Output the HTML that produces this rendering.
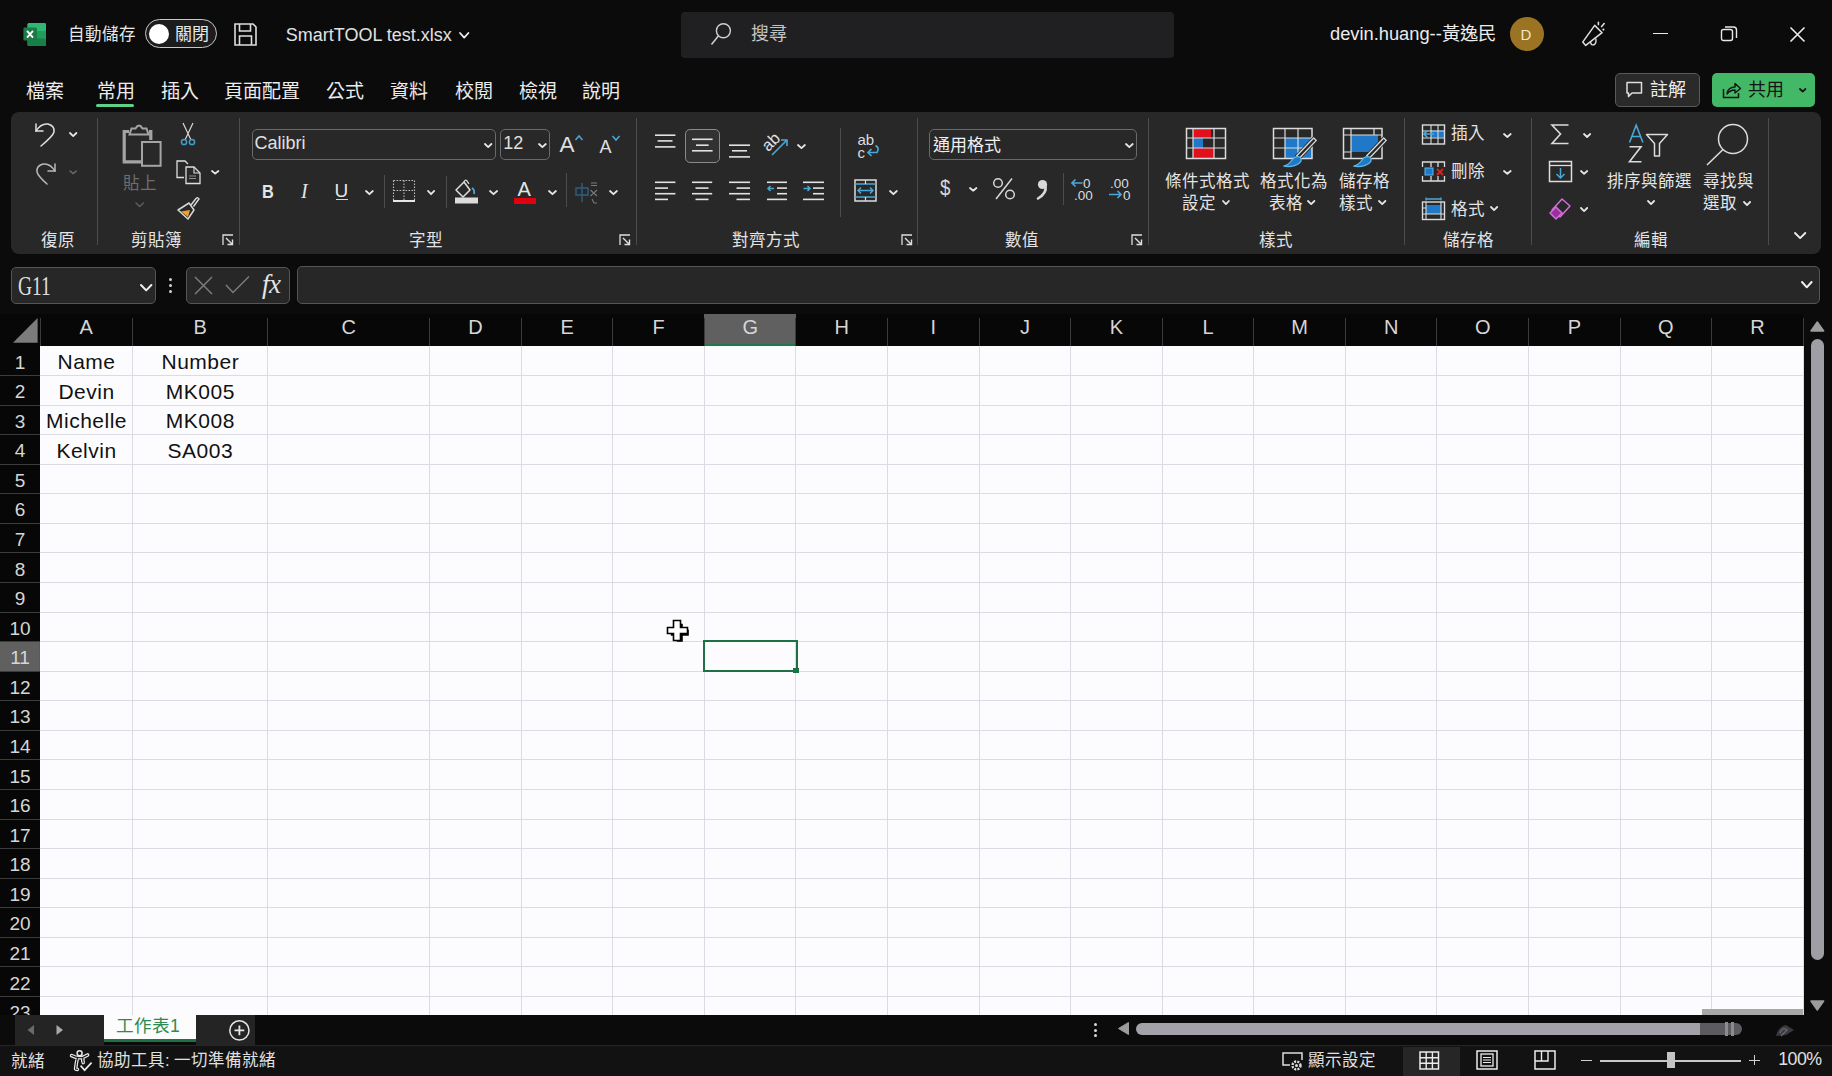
<!DOCTYPE html><html lang="zh-TW"><head><meta charset="utf-8"><title>Excel</title><style>
*{margin:0;padding:0;box-sizing:border-box}
html,body{width:1832px;height:1076px;overflow:hidden;background:#0b0b0b;font-family:"Liberation Sans",sans-serif}
.t{position:absolute;white-space:nowrap;line-height:1}
.r{position:absolute}
.s{position:absolute;overflow:visible}
</style></head><body>
<svg class="s" style="left:23px;top:23px;" width="23" height="23" viewBox="0 0 23 23">
<rect x="4.5" y="0" width="18.5" height="23" rx="1.5" fill="#1f9d5a"/>
<rect x="4.5" y="0" width="18.5" height="8" rx="1.5" fill="#2fb874"/>
<rect x="4.5" y="15.5" width="18.5" height="7.5" rx="1.5" fill="#168048"/>
<rect x="0.4" y="4.5" width="13.6" height="13.1" rx="1.2" fill="#1d7a44"/>
<path d="M4 7.8 L10 14.6 M10 7.8 L4 14.6" stroke="#fff" stroke-width="1.9"/>
</svg>
<div class="t" style="left:67.6px;top:26px;font-size:16.5px;color:#e8e8e8;">自動儲存</div>
<div class="r" style="left:145px;top:19px;width:71.5px;height:28.5px;background:#1c1c1c;border:1.5px solid #c8c8c8;border-radius:15px"></div>
<div class="r" style="left:148.7px;top:23.8px;width:20px;height:20px;background:#ffffff;border-radius:50%"></div>
<div class="t" style="left:175px;top:25.5px;font-size:17px;color:#e8e8e8;">關閉</div>
<svg class="s" style="left:234px;top:23px;" width="23" height="23" viewBox="0 0 23 23">
<path d="M1 1 H19 L22 4 V22 H1 Z" fill="none" stroke="#dedede" stroke-width="1.6"/>
<path d="M5.5 1 V8 H16.5 V1" fill="none" stroke="#dedede" stroke-width="1.6"/>
<path d="M5.5 22 V13 H17.5 V22" fill="none" stroke="#dedede" stroke-width="1.6"/>
</svg>
<div class="t" style="left:285.8px;top:25.9px;font-size:18px;color:#e2e2e2;">SmartTOOL test.xlsx</div>
<svg class="s" style="left:458.3px;top:30.700000000000003px;" width="12.399999999999977" height="8.599999999999994" viewBox="0 0 12.399999999999977 8.599999999999994"><polyline points="2,2 6.199999999999989,6.599999999999994 10.399999999999977,2" fill="none" stroke="#f0f0f0" stroke-width="1.8" stroke-linecap="round" stroke-linejoin="round"/></svg>
<div class="r" style="left:681px;top:12px;width:493px;height:45.5px;background:#202022;border-radius:4px"></div>
<svg class="s" style="left:709px;top:22px;" width="24" height="24" viewBox="0 0 24 24"><circle cx="14.4" cy="8.8" r="7" fill="none" stroke="#cfcfcf" stroke-width="1.4"/><path d="M9.5 13.8 L2.5 22.5" stroke="#cfcfcf" stroke-width="1.5"/></svg>
<div class="t" style="left:751px;top:24.7px;font-size:18px;color:#c4c4c4;">搜尋</div>
<div class="t" style="left:1330px;top:24.6px;font-size:18.3px;color:#ececec;">devin.huang--黃逸民</div>
<div class="r" style="left:1510px;top:17px;width:34px;height:34px;background:#9a7422;border-radius:50%"></div>
<div class="t" style="left:1520.5px;top:27px;font-size:15px;color:#f2e6c8;">D</div>
<svg class="s" style="left:1580px;top:21px;" width="28" height="26" viewBox="0 0 28 26">
<path d="M2.7 21.1 L14.7 4.4 L22.1 11.7 L5.7 24.4 Z" fill="none" stroke="#dedede" stroke-width="1.5" stroke-linejoin="round"/>
<path d="M10.5 20.8 Q11 25 14.5 23.5 Q16.5 22 15.8 17.5" fill="none" stroke="#dedede" stroke-width="1.4"/>
<path d="M18.4 1.3 V3.6 M21.6 5.6 L24.2 2.6" stroke="#dedede" stroke-width="1.6" stroke-linecap="round"/>
<circle cx="23.4" cy="8.6" r="1.1" fill="#dedede"/>
</svg>
<div class="r" style="left:1653px;top:32.6px;width:14.5px;height:1.6px;background:#e8e8e8;"></div>
<svg class="s" style="left:1720px;top:25px;" width="19" height="19" viewBox="0 0 19 19"><rect x="1.5" y="4.5" width="11" height="11" rx="2" fill="none" stroke="#e8e8e8" stroke-width="1.4"/><path d="M5 2 H13.5 Q16.5 2 16.5 5 V13" fill="none" stroke="#e8e8e8" stroke-width="1.4"/></svg>
<svg class="s" style="left:1789px;top:26px;" width="17" height="17" viewBox="0 0 17 17"><path d="M1.5 1.5 L15.5 15.5 M15.5 1.5 L1.5 15.5" stroke="#ececec" stroke-width="1.6"/></svg>
<div class="t" style="left:26.4px;top:81.5px;font-size:19px;color:#ececec;">檔案</div>
<div class="t" style="left:97px;top:81.5px;font-size:19px;color:#ececec;">常用</div>
<div class="t" style="left:161px;top:81.5px;font-size:19px;color:#ececec;">插入</div>
<div class="t" style="left:224px;top:81.5px;font-size:19px;color:#ececec;">頁面配置</div>
<div class="t" style="left:326.4px;top:81.5px;font-size:19px;color:#ececec;">公式</div>
<div class="t" style="left:390px;top:81.5px;font-size:19px;color:#ececec;">資料</div>
<div class="t" style="left:454.7px;top:81.5px;font-size:19px;color:#ececec;">校閱</div>
<div class="t" style="left:518.5px;top:81.5px;font-size:19px;color:#ececec;">檢視</div>
<div class="t" style="left:582px;top:81.5px;font-size:19px;color:#ececec;">說明</div>
<div class="r" style="left:95.7px;top:103.8px;width:38.6px;height:2.8px;background:#5fd08a;border-radius:2px"></div>
<div class="r" style="left:1615px;top:72.6px;width:85px;height:34px;background:#2a2a2a;border:1px solid #5a5a5a;border-radius:5px"></div>
<svg class="s" style="left:1625px;top:80px;" width="19" height="19" viewBox="0 0 19 19"><path d="M2 2.5 H16.5 V13 H7 L3.5 16.5 V13 H2 Z" fill="none" stroke="#dedede" stroke-width="1.5" stroke-linejoin="round"/></svg>
<div class="t" style="left:1650px;top:80.5px;font-size:18px;color:#ececec;">註解</div>
<div class="r" style="left:1712px;top:72.6px;width:103.3px;height:34px;background:#43b866;border-radius:5px"></div>
<svg class="s" style="left:1721px;top:80px;" width="21" height="20" viewBox="0 0 21 20"><path d="M2.5 9 V17.5 H17.5 V13" fill="none" stroke="#151515" stroke-width="1.5"/><path d="M6 14 Q7 7 14 7 V3.5 L19.5 8.5 L14 13 V10 Q9 10 6 14 Z" fill="none" stroke="#151515" stroke-width="1.4" stroke-linejoin="round"/></svg>
<div class="t" style="left:1747.5px;top:80.5px;font-size:18px;color:#141414;">共用</div>
<svg class="s" style="left:1798.2px;top:87.2px;" width="9.400000000000091" height="6.599999999999994" viewBox="0 0 9.400000000000091 6.599999999999994"><polyline points="2,2 4.7000000000000455,4.599999999999994 7.400000000000091,2" fill="none" stroke="#151515" stroke-width="1.8" stroke-linecap="round" stroke-linejoin="round"/></svg>
<div class="r" style="left:11px;top:112px;width:1809.6px;height:142px;background:#282828;border-radius:8px"></div>
<div class="r" style="left:96.7px;top:118px;width:1px;height:127px;background:#4c4c4c;"></div>
<div class="r" style="left:239.4px;top:118px;width:1px;height:127px;background:#4c4c4c;"></div>
<div class="r" style="left:635.6px;top:118px;width:1px;height:127px;background:#4c4c4c;"></div>
<div class="r" style="left:917.4px;top:118px;width:1px;height:127px;background:#4c4c4c;"></div>
<div class="r" style="left:1148.3px;top:118px;width:1px;height:127px;background:#4c4c4c;"></div>
<div class="r" style="left:1404px;top:118px;width:1px;height:127px;background:#4c4c4c;"></div>
<div class="r" style="left:1530.8px;top:118px;width:1px;height:127px;background:#4c4c4c;"></div>
<div class="r" style="left:1768.3px;top:118px;width:1px;height:127px;background:#4c4c4c;"></div>
<div class="r" style="left:383.8px;top:174.5px;width:1px;height:33.80000000000001px;background:#4c4c4c;"></div>
<div class="r" style="left:445.9px;top:175.8px;width:1px;height:31.799999999999983px;background:#4c4c4c;"></div>
<div class="r" style="left:566.4px;top:172.5px;width:1px;height:34.5px;background:#4c4c4c;"></div>
<div class="r" style="left:840px;top:127.6px;width:1px;height:89.80000000000001px;background:#4c4c4c;"></div>
<div class="r" style="left:1062.8px;top:172.5px;width:1px;height:32.5px;background:#4c4c4c;"></div>
<div class="t" style="left:40.8px;top:231.5px;font-size:16.5px;color:#e4e4e4;">復原</div>
<div class="t" style="left:131.4px;top:231.5px;font-size:16.5px;color:#e4e4e4;">剪貼簿</div>
<div class="t" style="left:409px;top:231.5px;font-size:16.5px;color:#e4e4e4;">字型</div>
<div class="t" style="left:731.7px;top:231.5px;font-size:16.5px;color:#e4e4e4;">對齊方式</div>
<div class="t" style="left:1004.6px;top:231.5px;font-size:16.5px;color:#e4e4e4;">數值</div>
<div class="t" style="left:1259.3px;top:231.5px;font-size:16.5px;color:#e4e4e4;">樣式</div>
<div class="t" style="left:1443px;top:231.5px;font-size:16.5px;color:#e4e4e4;">儲存格</div>
<div class="t" style="left:1633.6px;top:231.5px;font-size:16.5px;color:#e4e4e4;">編輯</div>
<svg class="s" style="left:222px;top:234px;" width="12" height="12" viewBox="0 0 12 12"><path d="M1 11 V1 H11" fill="none" stroke="#dedede" stroke-width="1.3"/><path d="M4 4 L10.5 10.5 M5.5 10.5 H10.5 V5.5" fill="none" stroke="#dedede" stroke-width="1.4"/></svg>
<svg class="s" style="left:619.3px;top:234.3px;" width="12" height="12" viewBox="0 0 12 12"><path d="M1 11 V1 H11" fill="none" stroke="#dedede" stroke-width="1.3"/><path d="M4 4 L10.5 10.5 M5.5 10.5 H10.5 V5.5" fill="none" stroke="#dedede" stroke-width="1.4"/></svg>
<svg class="s" style="left:900.9px;top:234.3px;" width="12" height="12" viewBox="0 0 12 12"><path d="M1 11 V1 H11" fill="none" stroke="#dedede" stroke-width="1.3"/><path d="M4 4 L10.5 10.5 M5.5 10.5 H10.5 V5.5" fill="none" stroke="#dedede" stroke-width="1.4"/></svg>
<svg class="s" style="left:1131.4px;top:234.3px;" width="12" height="12" viewBox="0 0 12 12"><path d="M1 11 V1 H11" fill="none" stroke="#dedede" stroke-width="1.3"/><path d="M4 4 L10.5 10.5 M5.5 10.5 H10.5 V5.5" fill="none" stroke="#dedede" stroke-width="1.4"/></svg>
<svg class="s" style="left:1793.3px;top:231.2px;" width="14.300000000000182" height="9.100000000000023" viewBox="0 0 14.300000000000182 9.100000000000023"><polyline points="2,2 7.150000000000091,7.100000000000023 12.300000000000182,2" fill="none" stroke="#f0f0f0" stroke-width="1.8" stroke-linecap="round" stroke-linejoin="round"/></svg>
<svg class="s" style="left:33px;top:121px;" width="25" height="27" viewBox="0 0 25 27"><path d="M3 10 Q8 2 15 3 Q22 5 21 11 Q20 15 8 25" fill="none" stroke="#dedede" stroke-width="1.5" stroke-linecap="round"/><path d="M3 3 V10 H10" fill="none" stroke="#dedede" stroke-width="1.5" stroke-linecap="round"/></svg>
<svg class="s" style="left:67.8px;top:131.2px;" width="10.400000000000006" height="7.100000000000023" viewBox="0 0 10.400000000000006 7.100000000000023"><polyline points="2,2 5.200000000000003,5.100000000000023 8.400000000000006,2" fill="none" stroke="#e6e6e6" stroke-width="1.8" stroke-linecap="round" stroke-linejoin="round"/></svg>
<svg class="s" style="left:33px;top:158px;transform:scaleY(-1)" width="25" height="27" viewBox="0 0 25 27"><path d="M22 14 Q17 22 10 21 Q3 19 4 13 Q5 9 14 1" fill="none" stroke="#b8b8b8" stroke-width="1.5" stroke-linecap="round"/><path d="M22 21 V14 H15" fill="none" stroke="#b8b8b8" stroke-width="1.5" stroke-linecap="round"/></svg>
<svg class="s" style="left:67.8px;top:168.7px;" width="10.400000000000006" height="6.600000000000023" viewBox="0 0 10.400000000000006 6.600000000000023"><polyline points="2,2 5.200000000000003,4.600000000000023 8.400000000000006,2" fill="none" stroke="#6a6a6a" stroke-width="1.4" stroke-linecap="round" stroke-linejoin="round"/></svg>
<svg class="s" style="left:121px;top:123px;" width="42" height="45" viewBox="0 0 42 45">
<path d="M22 38.8 H3.2 V8.5 H8 M28 8.5 H29.8 V17" fill="none" stroke="#a4a4a4" stroke-width="3.2"/>
<path d="M8.5 11.5 L10.5 5.5 H14.5 Q18 -0.5 21.5 5.5 H25.5 L27.5 11.5 Z" fill="#282828" stroke="#a4a4a4" stroke-width="2"/>
<rect x="21" y="19" width="18.6" height="23.8" fill="none" stroke="#a4a4a4" stroke-width="2"/>
</svg>
<div class="t" style="left:123px;top:175px;font-size:16.5px;color:#6e6e6e;">貼上</div>
<svg class="s" style="left:133.8px;top:200.7px;" width="11.399999999999977" height="7.600000000000023" viewBox="0 0 11.399999999999977 7.600000000000023"><polyline points="2,2 5.699999999999989,5.600000000000023 9.399999999999977,2" fill="none" stroke="#5e5e5e" stroke-width="1.4" stroke-linecap="round" stroke-linejoin="round"/></svg>
<svg class="s" style="left:178px;top:121px;" width="20" height="27" viewBox="0 0 20 27"><path d="M5 2 L13 19 M15 2 L7 19" stroke="#d8d8d8" stroke-width="1.2"/><circle cx="6" cy="21" r="2.6" fill="none" stroke="#3f9fd0" stroke-width="1.5"/><circle cx="14" cy="21" r="2.6" fill="none" stroke="#3f9fd0" stroke-width="1.5"/></svg>
<svg class="s" style="left:175px;top:159px;" width="27" height="26" viewBox="0 0 27 26"><path d="M9 18.5 H2 V2 H10 L13 5" fill="none" stroke="#dedede" stroke-width="1.3"/><path d="M11 8 H19 L25 14 V24.5 H11 Z" fill="none" stroke="#dedede" stroke-width="1.3"/><path d="M19 8 V14 H25" fill="none" stroke="#dedede" stroke-width="1.1"/><path d="M14 17 H21 M14 19.5 H21" stroke="#9a9a9a" stroke-width="0.9"/></svg>
<svg class="s" style="left:209.8px;top:169.2px;" width="10.399999999999977" height="6.600000000000023" viewBox="0 0 10.399999999999977 6.600000000000023"><polyline points="2,2 5.199999999999989,4.600000000000023 8.399999999999977,2" fill="none" stroke="#e6e6e6" stroke-width="1.8" stroke-linecap="round" stroke-linejoin="round"/></svg>
<svg class="s" style="left:176px;top:196px;" width="25" height="25" viewBox="0 0 25 25"><path d="M15 9 L20 2.5 Q22 1 23 3 L17.5 10.5" fill="none" stroke="#d8d8d8" stroke-width="1.5"/><path d="M2 14 L13 7 L18 14 L12 23 Z" fill="none" stroke="#d8d8d8" stroke-width="1.5" stroke-linejoin="round"/><path d="M5 15.5 L14 14 L12 21 Z" fill="#f0a030"/></svg>
<div class="r" style="left:251.5px;top:129px;width:244.2px;height:31px;background:transparent;border:1px solid #6a6a6a;border-radius:5px"></div>
<div class="t" style="left:254.6px;top:134.4px;font-size:18px;color:#e0e0e0;">Calibri</div>
<svg class="s" style="left:482.8px;top:142.2px;" width="10.399999999999977" height="7.100000000000023" viewBox="0 0 10.399999999999977 7.100000000000023"><polyline points="2,2 5.199999999999989,5.100000000000023 8.399999999999977,2" fill="none" stroke="#e8e8e8" stroke-width="1.8" stroke-linecap="round" stroke-linejoin="round"/></svg>
<div class="r" style="left:499.6px;top:129px;width:50.7px;height:31px;background:transparent;border:1px solid #6a6a6a;border-radius:5px"></div>
<div class="t" style="left:503.2px;top:134.4px;font-size:18px;color:#e0e0e0;">12</div>
<svg class="s" style="left:536.8px;top:142.2px;" width="10.800000000000068" height="7.100000000000023" viewBox="0 0 10.800000000000068 7.100000000000023"><polyline points="2,2 5.400000000000034,5.100000000000023 8.800000000000068,2" fill="none" stroke="#e8e8e8" stroke-width="1.8" stroke-linecap="round" stroke-linejoin="round"/></svg>
<div class="t" style="left:559.6px;top:133.5px;font-size:22.5px;color:#e0e0e0;">A</div>
<svg class="s" style="left:574px;top:134px;" width="10" height="8" viewBox="0 0 10 8"><polyline points="1.5,6 5,2 8.5,6" fill="none" stroke="#4aa8d8" stroke-width="1.5"/></svg>
<div class="t" style="left:599.5px;top:137.5px;font-size:18px;color:#e0e0e0;">A</div>
<svg class="s" style="left:611px;top:134px;" width="10" height="8" viewBox="0 0 10 8"><polyline points="1.5,2 5,6 8.5,2" fill="none" stroke="#4aa8d8" stroke-width="1.5"/></svg>
<div class="t" style="left:262.3px;top:181.5px;font-size:19px;color:#e4e4e4;font-weight:bold;transform:scaleX(0.86);transform-origin:0 0">B</div>
<div class="t" style="left:301px;top:180.9px;font-size:20px;color:#e4e4e4;font-family:'Liberation Serif',serif;font-style:italic">I</div>
<div class="t" style="left:334.5px;top:180.9px;font-size:19px;color:#e4e4e4;">U</div>
<div class="r" style="left:335.6px;top:199.3px;width:12.4px;height:1.2px;background:#d8d8d8;"></div>
<svg class="s" style="left:363.8px;top:188.7px;" width="10.799999999999955" height="7.200000000000017" viewBox="0 0 10.799999999999955 7.200000000000017"><polyline points="2,2 5.399999999999977,5.200000000000017 8.799999999999955,2" fill="none" stroke="#e6e6e6" stroke-width="1.8" stroke-linecap="round" stroke-linejoin="round"/></svg>
<svg class="s" style="left:392px;top:179px;" width="24" height="24" viewBox="0 0 24 24"><path d="M1.5 1.5 H22.5 V21 M1.5 1.5 V21 M12 1.5 V21 M1.5 11.5 H22.5" fill="none" stroke="#bdbdbd" stroke-width="1.1" stroke-dasharray="1.6 1.4"/><path d="M1 22 H23" stroke="#e6e6e6" stroke-width="2"/></svg>
<svg class="s" style="left:426.2px;top:188.7px;" width="10.199999999999989" height="7.200000000000017" viewBox="0 0 10.199999999999989 7.200000000000017"><polyline points="2,2 5.099999999999994,5.200000000000017 8.199999999999989,2" fill="none" stroke="#e6e6e6" stroke-width="1.8" stroke-linecap="round" stroke-linejoin="round"/></svg>
<svg class="s" style="left:453px;top:178px;" width="27" height="27" viewBox="0 0 27 27"><path d="M3 12 L11 4 L17 12 L10 19 Z" fill="none" stroke="#dedede" stroke-width="1.5" stroke-linejoin="round"/><path d="M11 4 Q12 1 14 3 L16 6" fill="none" stroke="#dedede" stroke-width="1.3"/><path d="M19 10 Q22 12 21 16" fill="none" stroke="#4aa8d8" stroke-width="1.8"/><rect x="2" y="19.5" width="23" height="6" fill="#dcdcdc"/></svg>
<svg class="s" style="left:487.8px;top:188.7px;" width="11.099999999999966" height="7.200000000000017" viewBox="0 0 11.099999999999966 7.200000000000017"><polyline points="2,2 5.549999999999983,5.200000000000017 9.099999999999966,2" fill="none" stroke="#e6e6e6" stroke-width="1.8" stroke-linecap="round" stroke-linejoin="round"/></svg>
<div class="t" style="left:517.5px;top:178.5px;font-size:20px;color:#e4e4e4;">A</div>
<div class="r" style="left:514px;top:197.9px;width:22px;height:5.8px;background:#e00010;"></div>
<svg class="s" style="left:546.5px;top:188.7px;" width="10.900000000000091" height="7.200000000000017" viewBox="0 0 10.900000000000091 7.200000000000017"><polyline points="2,2 5.4500000000000455,5.200000000000017 8.900000000000091,2" fill="none" stroke="#e6e6e6" stroke-width="1.8" stroke-linecap="round" stroke-linejoin="round"/></svg>
<svg class="s" style="left:575px;top:181px;" width="25" height="23" viewBox="0 0 25 23"><path d="M1 7 H13 V14 H1 Z M7 2 V21" fill="none" stroke="#2f5f80" stroke-width="1.4"/><path d="M16 2 H22 M16 4.5 H22 M15.5 9 L22 15 M22 9 L15.5 15 M17 18 L19 22 H22" fill="none" stroke="#7a7a7a" stroke-width="1.1"/></svg>
<svg class="s" style="left:608.3px;top:188.7px;" width="10.900000000000091" height="7.200000000000017" viewBox="0 0 10.900000000000091 7.200000000000017"><polyline points="2,2 5.4500000000000455,5.200000000000017 8.900000000000091,2" fill="none" stroke="#e6e6e6" stroke-width="1.8" stroke-linecap="round" stroke-linejoin="round"/></svg>
<svg class="s" style="left:654px;top:130px;" width="24" height="24" viewBox="0 0 24 24"><path d="M1 5.2 H21.4" stroke="#e2e2e2" stroke-width="1.6"/><path d="M3.6 10.9 H18.5" stroke="#e2e2e2" stroke-width="1.6"/><path d="M1 16.9 H21.4" stroke="#e2e2e2" stroke-width="1.6"/></svg>
<div class="r" style="left:685.3px;top:129px;width:34.3px;height:33.5px;background:#323232;border:1px solid #8a8a8a;border-radius:5px"></div>
<svg class="s" style="left:691px;top:135px;" width="24" height="24" viewBox="0 0 24 24"><path d="M1 4.3 H21.6" stroke="#e2e2e2" stroke-width="1.6"/><path d="M5 10.2 H17.6" stroke="#e2e2e2" stroke-width="1.6"/><path d="M1 15.8 H21.6" stroke="#e2e2e2" stroke-width="1.6"/></svg>
<svg class="s" style="left:728px;top:140px;" width="24" height="24" viewBox="0 0 24 24"><path d="M1 5.2 H22" stroke="#e2e2e2" stroke-width="1.6"/><path d="M4 10.8 H19" stroke="#e2e2e2" stroke-width="1.6"/><path d="M1 16.9 H22" stroke="#e2e2e2" stroke-width="1.6"/></svg>
<svg class="s" style="left:763px;top:132px;" width="28" height="26" viewBox="0 0 28 26"><text x="0" y="0" transform="translate(5.2,20.3) rotate(-45)" font-family="Liberation Sans" font-size="16.5" fill="#e2e2e2">ab</text><path d="M9 23 L24 8 M18 8 H24 V14" fill="none" stroke="#4aa8d8" stroke-width="1.6"/></svg>
<svg class="s" style="left:795.5999999999999px;top:143.2px;" width="10.900000000000091" height="7.100000000000023" viewBox="0 0 10.900000000000091 7.100000000000023"><polyline points="2,2 5.4500000000000455,5.100000000000023 8.900000000000091,2" fill="none" stroke="#e6e6e6" stroke-width="1.8" stroke-linecap="round" stroke-linejoin="round"/></svg>
<svg class="s" style="left:654px;top:177px;" width="24" height="26" viewBox="0 0 24 26"><path d="M1 5.3 H21.4" stroke="#e2e2e2" stroke-width="1.6"/><path d="M1 11.1 H14" stroke="#e2e2e2" stroke-width="1.6"/><path d="M1 16.7 H21.4" stroke="#e2e2e2" stroke-width="1.6"/><path d="M1 22.4 H14" stroke="#e2e2e2" stroke-width="1.6"/></svg>
<svg class="s" style="left:691px;top:177px;" width="24" height="26" viewBox="0 0 24 26"><path d="M1 5.3 H21.2" stroke="#e2e2e2" stroke-width="1.6"/><path d="M4.5 11.1 H17.5" stroke="#e2e2e2" stroke-width="1.6"/><path d="M1 16.7 H21.2" stroke="#e2e2e2" stroke-width="1.6"/><path d="M4.5 22.4 H17.5" stroke="#e2e2e2" stroke-width="1.6"/></svg>
<svg class="s" style="left:728px;top:177px;" width="24" height="26" viewBox="0 0 24 26"><path d="M1 5.3 H22" stroke="#e2e2e2" stroke-width="1.6"/><path d="M8.5 11.1 H22" stroke="#e2e2e2" stroke-width="1.6"/><path d="M1 16.7 H22" stroke="#e2e2e2" stroke-width="1.6"/><path d="M8.5 22.4 H22" stroke="#e2e2e2" stroke-width="1.6"/></svg>
<svg class="s" style="left:766px;top:177px;" width="24" height="26" viewBox="0 0 24 26"><path d="M1 5.3 H21" stroke="#e2e2e2" stroke-width="1.6"/><path d="M11 11.1 H21" stroke="#e2e2e2" stroke-width="1.6"/><path d="M11 16.7 H21" stroke="#e2e2e2" stroke-width="1.6"/><path d="M1 22.4 H21" stroke="#e2e2e2" stroke-width="1.6"/><path d="M8 11.5 H2 M4.5 9 L2 11.5 L4.5 14" fill="none" stroke="#4aa8d8" stroke-width="1.5"/></svg>
<svg class="s" style="left:802px;top:177px;" width="24" height="26" viewBox="0 0 24 26"><path d="M1 5.3 H22" stroke="#e2e2e2" stroke-width="1.6"/><path d="M11 11.1 H22" stroke="#e2e2e2" stroke-width="1.6"/><path d="M11 16.7 H22" stroke="#e2e2e2" stroke-width="1.6"/><path d="M1 22.4 H22" stroke="#e2e2e2" stroke-width="1.6"/><path d="M1.5 11.5 H8 M5.5 9 L8 11.5 L5.5 14" fill="none" stroke="#4aa8d8" stroke-width="1.5"/></svg>
<svg class="s" style="left:856px;top:132px;" width="26" height="28" viewBox="0 0 26 28"><text x="1.5" y="13" font-family="Liberation Sans" font-size="15" fill="#dcdcdc">ab</text><text x="1.5" y="26" font-family="Liberation Sans" font-size="15" fill="#dcdcdc">c</text><path d="M19.5 13.5 Q24 16 21 20.5 H12 M15.5 17 L12 20.5 L15.5 24" fill="none" stroke="#4aa8d8" stroke-width="1.7"/></svg>
<svg class="s" style="left:854px;top:179px;" width="24" height="24" viewBox="0 0 24 24"><rect x="1" y="1" width="21" height="21" fill="none" stroke="#dcdcdc" stroke-width="1.5"/><path d="M1 5 H22 M1 18 H22" stroke="#4aa8d8" stroke-width="1.5"/><path d="M11.5 1 V5 M11.5 18 V22" stroke="#dcdcdc" stroke-width="1.2"/><path d="M4 11.5 H19 M7 8.5 L4 11.5 L7 14.5 M16 8.5 L19 11.5 L16 14.5" fill="none" stroke="#4aa8d8" stroke-width="1.5"/></svg>
<svg class="s" style="left:888.0px;top:188.7px;" width="10.800000000000068" height="7.200000000000017" viewBox="0 0 10.800000000000068 7.200000000000017"><polyline points="2,2 5.400000000000034,5.200000000000017 8.800000000000068,2" fill="none" stroke="#e6e6e6" stroke-width="1.8" stroke-linecap="round" stroke-linejoin="round"/></svg>
<div class="r" style="left:929.4px;top:129px;width:208.1px;height:31px;background:transparent;border:1px solid #6a6a6a;border-radius:5px"></div>
<div class="t" style="left:933px;top:136.5px;font-size:17px;color:#f0f0f0;">通用格式</div>
<svg class="s" style="left:1123.8px;top:142.2px;" width="10.700000000000045" height="7.100000000000023" viewBox="0 0 10.700000000000045 7.100000000000023"><polyline points="2,2 5.350000000000023,5.100000000000023 8.700000000000045,2" fill="none" stroke="#e8e8e8" stroke-width="1.8" stroke-linecap="round" stroke-linejoin="round"/></svg>
<div class="t" style="left:940px;top:176.5px;font-size:22px;color:#d8d8d8;transform:scaleX(0.85);transform-origin:0 0">$</div>
<svg class="s" style="left:968.0px;top:186.2px;" width="10.400000000000091" height="6.700000000000017" viewBox="0 0 10.400000000000091 6.700000000000017"><polyline points="2,2 5.2000000000000455,4.700000000000017 8.400000000000091,2" fill="none" stroke="#e6e6e6" stroke-width="1.8" stroke-linecap="round" stroke-linejoin="round"/></svg>
<svg class="s" style="left:992px;top:177px;" width="25" height="24" viewBox="0 0 25 24"><circle cx="6" cy="6" r="4.3" fill="none" stroke="#d8d8d8" stroke-width="1.5"/><circle cx="18" cy="17.5" r="4.3" fill="none" stroke="#d8d8d8" stroke-width="1.5"/><path d="M20 1.5 L4 22" stroke="#d8d8d8" stroke-width="1.5"/></svg>
<svg class="s" style="left:1035px;top:178px;" width="15" height="22" viewBox="0 0 15 22"><circle cx="7.5" cy="6.5" r="4.6" fill="#d8d8d8"/><path d="M10.5 8 Q12 15 3 20.5" fill="none" stroke="#d8d8d8" stroke-width="2.6" stroke-linecap="round"/></svg>
<svg class="s" style="left:1070px;top:176px;" width="26" height="25" viewBox="0 0 26 25"><text x="13" y="11.5" font-family="Liberation Sans" font-size="13.5" fill="#dcdcdc">0</text><text x="4" y="23.5" font-family="Liberation Sans" font-size="13.5" fill="#dcdcdc">.00</text><path d="M12.5 7 H2 M5.5 3.5 L2 7 L5.5 10.5" fill="none" stroke="#4aa8d8" stroke-width="1.7"/></svg>
<svg class="s" style="left:1108px;top:176px;" width="26" height="25" viewBox="0 0 26 25"><text x="2" y="11.5" font-family="Liberation Sans" font-size="13.5" fill="#dcdcdc">.00</text><text x="15" y="23.5" font-family="Liberation Sans" font-size="13.5" fill="#dcdcdc">0</text><path d="M1 18.5 H13 M9.5 15 L13 18.5 L9.5 22" fill="none" stroke="#4aa8d8" stroke-width="1.7"/></svg>
<svg class="s" style="left:1185px;top:127px;" width="42" height="34" viewBox="0 0 42 34">
<rect x="8" y="1.5" width="18" height="9.5" fill="#e0101e"/>
<rect x="8" y="11" width="10" height="10" fill="#1f78c8"/>
<rect x="8" y="21" width="21" height="10.5" fill="#e0101e"/>
<rect x="1.5" y="1.5" width="39" height="30" fill="none" stroke="#dcdcdc" stroke-width="1.5"/>
<path d="M8 1.5 V31.5 M29 1.5 V31.5 M1.5 11 H40.5 M1.5 21 H40.5" stroke="#dcdcdc" stroke-width="1.2"/>
</svg>
<div class="t" style="left:1165px;top:173px;font-size:16.5px;color:#e4e4e4;">條件式格式</div>
<div class="t" style="left:1182px;top:195px;font-size:16.5px;color:#e4e4e4;">設定</div>
<svg class="s" style="left:1220.8px;top:199.2px;" width="9.900000000000091" height="7.100000000000023" viewBox="0 0 9.900000000000091 7.100000000000023"><polyline points="2,2 4.9500000000000455,5.100000000000023 7.900000000000091,2" fill="none" stroke="#e6e6e6" stroke-width="1.8" stroke-linecap="round" stroke-linejoin="round"/></svg>
<svg class="s" style="left:1272px;top:127px;" width="45" height="41" viewBox="0 0 45 41">
<rect x="13" y="11" width="27" height="20" fill="#1f78c8"/>
<rect x="1.5" y="1.5" width="38.5" height="30" fill="none" stroke="#dcdcdc" stroke-width="1.5"/>
<path d="M13 1.5 V31.5 M26 1.5 V31.5 M1.5 11 H40 M1.5 21 H40" stroke="#dcdcdc" stroke-width="1.2"/>
<path d="M43 12.2 L26 30" stroke="#282828" stroke-width="6.5" stroke-linecap="round"/>
<path d="M44.3 13.4 L41.7 11 L24.7 28.8 L27.3 31.2 Z" fill="#282828" stroke="#dcdcdc" stroke-width="1.3" stroke-linejoin="round"/>
<path d="M11.5 39.2 Q17 37.5 20 33 Q23 28.5 27.5 30 Q31 32.5 27.5 36 Q22 40.5 11.5 39.2 Z" fill="#1f78c8" stroke="#5ab8e8" stroke-width="1.3"/>
</svg>
<div class="t" style="left:1260px;top:173px;font-size:16.5px;color:#e4e4e4;">格式化為</div>
<div class="t" style="left:1269px;top:195px;font-size:16.5px;color:#e4e4e4;">表格</div>
<svg class="s" style="left:1306.3px;top:199.2px;" width="10.400000000000091" height="7.100000000000023" viewBox="0 0 10.400000000000091 7.100000000000023"><polyline points="2,2 5.2000000000000455,5.100000000000023 8.400000000000091,2" fill="none" stroke="#e6e6e6" stroke-width="1.8" stroke-linecap="round" stroke-linejoin="round"/></svg>
<svg class="s" style="left:1342px;top:127px;" width="45" height="41" viewBox="0 0 45 41">
<rect x="9" y="8" width="27" height="17" fill="#1f78c8"/>
<rect x="1.5" y="1.5" width="38.5" height="30" fill="none" stroke="#dcdcdc" stroke-width="1.5"/>
<path d="M9 1.5 V31.5 M1.5 8 H40 M1.5 25 H9 M32 1.5 V8" stroke="#dcdcdc" stroke-width="1.2"/>
<path d="M43 12.2 L26 30" stroke="#282828" stroke-width="6.5" stroke-linecap="round"/>
<path d="M44.3 13.4 L41.7 11 L24.7 28.8 L27.3 31.2 Z" fill="#282828" stroke="#dcdcdc" stroke-width="1.3" stroke-linejoin="round"/>
<path d="M11.5 39.2 Q17 37.5 20 33 Q23 28.5 27.5 30 Q31 32.5 27.5 36 Q22 40.5 11.5 39.2 Z" fill="#1f78c8" stroke="#5ab8e8" stroke-width="1.3"/>
</svg>
<div class="t" style="left:1338.8px;top:173px;font-size:16.5px;color:#e4e4e4;">儲存格</div>
<div class="t" style="left:1338.8px;top:195px;font-size:16.5px;color:#e4e4e4;">樣式</div>
<svg class="s" style="left:1376.8px;top:199.2px;" width="10.400000000000091" height="7.100000000000023" viewBox="0 0 10.400000000000091 7.100000000000023"><polyline points="2,2 5.2000000000000455,5.100000000000023 8.400000000000091,2" fill="none" stroke="#e6e6e6" stroke-width="1.8" stroke-linecap="round" stroke-linejoin="round"/></svg>
<svg class="s" style="left:1421px;top:124px;" width="25" height="22" viewBox="0 0 25 22"><rect x="10" y="6.5" width="13" height="7" fill="#1f78c8"/><rect x="1.5" y="1" width="22" height="19" fill="none" stroke="#dcdcdc" stroke-width="1.4"/><path d="M10 1 V20 M17 1 V20 M1.5 7 H23.5 M1.5 14 H23.5" stroke="#dcdcdc" stroke-width="1.1"/><path d="M13 10 H3 M6.5 6.5 L3 10 L6.5 13.5" fill="none" stroke="#4aa8d8" stroke-width="1.7"/></svg>
<div class="t" style="left:1451.4px;top:125px;font-size:16.5px;color:#e4e4e4;">插入</div>
<svg class="s" style="left:1501.8px;top:131.7px;" width="10.700000000000045" height="7.000000000000028" viewBox="0 0 10.700000000000045 7.000000000000028"><polyline points="2,2 5.350000000000023,5.000000000000028 8.700000000000045,2" fill="none" stroke="#e6e6e6" stroke-width="1.8" stroke-linecap="round" stroke-linejoin="round"/></svg>
<svg class="s" style="left:1421px;top:161px;" width="25" height="22" viewBox="0 0 25 22"><path d="M1.5 6 V1 H23.5 V6 M1.5 15 V20 H23.5 V15 M10 1 V6 M17 1 V6 M10 15 V20 M17 15 V20" fill="none" stroke="#dcdcdc" stroke-width="1.3"/><rect x="4" y="7" width="8" height="7" fill="#1f78c8" stroke="#5ab8e8" stroke-width="1"/><path d="M16 8 L22 14 M22 8 L16 14" stroke="#e02020" stroke-width="1.8"/></svg>
<div class="t" style="left:1451.4px;top:162.5px;font-size:16.5px;color:#e4e4e4;">刪除</div>
<svg class="s" style="left:1501.8px;top:169.0px;" width="10.700000000000045" height="6.800000000000011" viewBox="0 0 10.700000000000045 6.800000000000011"><polyline points="2,2 5.350000000000023,4.800000000000011 8.700000000000045,2" fill="none" stroke="#e6e6e6" stroke-width="1.8" stroke-linecap="round" stroke-linejoin="round"/></svg>
<svg class="s" style="left:1421px;top:197px;" width="25" height="24" viewBox="0 0 25 24"><rect x="5" y="8" width="15" height="9" fill="#1f78c8"/><rect x="1.5" y="5" width="22" height="17.5" fill="none" stroke="#dcdcdc" stroke-width="1.4"/><path d="M5 5 V22.5 M20 5 V22.5 M1.5 17 H23.5 M1.5 11 H5" stroke="#dcdcdc" stroke-width="1.1"/><path d="M5 2 H20 M5 0.5 V3.5 M20 0.5 V3.5" stroke="#4aa8d8" stroke-width="1.3"/></svg>
<div class="t" style="left:1451.4px;top:200.5px;font-size:16.5px;color:#e4e4e4;">格式</div>
<svg class="s" style="left:1489.2px;top:205.2px;" width="10.200000000000045" height="7.100000000000023" viewBox="0 0 10.200000000000045 7.100000000000023"><polyline points="2,2 5.100000000000023,5.100000000000023 8.200000000000045,2" fill="none" stroke="#e6e6e6" stroke-width="1.8" stroke-linecap="round" stroke-linejoin="round"/></svg>
<svg class="s" style="left:1550px;top:123px;" width="21" height="23" viewBox="0 0 21 23"><path d="M18.5 2 H2 L10.5 11 L2 20.5 H18.5" fill="none" stroke="#dcdcdc" stroke-width="1.6"/></svg>
<svg class="s" style="left:1582.3px;top:131.7px;" width="10.200000000000045" height="7.000000000000028" viewBox="0 0 10.200000000000045 7.000000000000028"><polyline points="2,2 5.100000000000023,5.000000000000028 8.200000000000045,2" fill="none" stroke="#e6e6e6" stroke-width="1.8" stroke-linecap="round" stroke-linejoin="round"/></svg>
<svg class="s" style="left:1548px;top:160px;" width="25" height="23" viewBox="0 0 25 23"><rect x="1.5" y="1.5" width="22" height="20" fill="none" stroke="#dcdcdc" stroke-width="1.5"/><path d="M1.5 5.5 H23.5" stroke="#dcdcdc" stroke-width="1.3"/><path d="M12.5 8 V18 M8.5 14 L12.5 18 L16.5 14" fill="none" stroke="#4aa8d8" stroke-width="1.5"/></svg>
<svg class="s" style="left:1579.0px;top:169.0px;" width="10.200000000000045" height="6.800000000000011" viewBox="0 0 10.200000000000045 6.800000000000011"><polyline points="2,2 5.100000000000023,4.800000000000011 8.200000000000045,2" fill="none" stroke="#e6e6e6" stroke-width="1.8" stroke-linecap="round" stroke-linejoin="round"/></svg>
<svg class="s" style="left:1548px;top:197px;" width="24" height="24" viewBox="0 0 24 24"><path d="M14 2 L22 9 L12 20 L4 13 Z" fill="none" stroke="#d070d8" stroke-width="1.5" stroke-linejoin="round"/><path d="M2 16 L8 10 L14 16 L8 22 Z" fill="#9a30a0" stroke="#d070d8" stroke-width="1.5" stroke-linejoin="round"/></svg>
<svg class="s" style="left:1579.0px;top:205.7px;" width="10.200000000000045" height="7.100000000000023" viewBox="0 0 10.200000000000045 7.100000000000023"><polyline points="2,2 5.100000000000023,5.100000000000023 8.200000000000045,2" fill="none" stroke="#e6e6e6" stroke-width="1.8" stroke-linecap="round" stroke-linejoin="round"/></svg>
<svg class="s" style="left:1626px;top:122px;" width="20" height="44" viewBox="0 0 20 44"><path d="M3.5 20.5 L10.2 3.2 L16.9 20.5 M5.8 14.5 H14.6" fill="none" stroke="#4aa8d8" stroke-width="1.6"/><path d="M3.5 24.8 H15 L3.5 39.8 H15.5" fill="none" stroke="#dcdcdc" stroke-width="1.6" stroke-linejoin="miter"/></svg>
<svg class="s" style="left:1645px;top:133px;" width="25" height="25" viewBox="0 0 25 25"><path d="M1.5 1.5 H22.5 L14.5 10.5 V23 H9.5 V10.5 Z" fill="none" stroke="#dcdcdc" stroke-width="1.5" stroke-linejoin="round"/></svg>
<div class="t" style="left:1607px;top:172.5px;font-size:16.5px;color:#e4e4e4;">排序與篩選</div>
<svg class="s" style="left:1646.1px;top:199.2px;" width="10.100000000000136" height="7.100000000000023" viewBox="0 0 10.100000000000136 7.100000000000023"><polyline points="2,2 5.050000000000068,5.100000000000023 8.100000000000136,2" fill="none" stroke="#e6e6e6" stroke-width="1.8" stroke-linecap="round" stroke-linejoin="round"/></svg>
<svg class="s" style="left:1705px;top:122px;" width="46" height="46" viewBox="0 0 46 46"><circle cx="28" cy="17" r="14.5" fill="none" stroke="#dcdcdc" stroke-width="1.5"/><path d="M18 27.5 L2 43" stroke="#dcdcdc" stroke-width="1.6"/></svg>
<div class="t" style="left:1703.2px;top:172.5px;font-size:16.5px;color:#e4e4e4;">尋找與</div>
<div class="t" style="left:1703.2px;top:195.3px;font-size:16.5px;color:#e4e4e4;">選取</div>
<svg class="s" style="left:1741.8px;top:199.7px;" width="10.100000000000136" height="7.100000000000023" viewBox="0 0 10.100000000000136 7.100000000000023"><polyline points="2,2 5.050000000000068,5.100000000000023 8.100000000000136,2" fill="none" stroke="#e6e6e6" stroke-width="1.8" stroke-linecap="round" stroke-linejoin="round"/></svg>
<div class="r" style="left:11.4px;top:266.5px;width:144.4px;height:37.5px;background:#272727;border:1px solid #555555;border-radius:5px"></div>
<div class="t" style="left:18.3px;top:273.1px;font-size:27px;color:#dedede;font-family:'Liberation Serif',serif;transform:scaleX(0.72);transform-origin:0 0">G11</div>
<svg class="s" style="left:138.8px;top:282.7px;" width="14.399999999999977" height="9.400000000000034" viewBox="0 0 14.399999999999977 9.400000000000034"><polyline points="2,2 7.199999999999989,7.400000000000034 12.399999999999977,2" fill="none" stroke="#f0f0f0" stroke-width="2" stroke-linecap="round" stroke-linejoin="round"/></svg>
<div class="r" style="left:169.3px;top:278.0px;width:3px;height:3px;background:#d0d0d0;border-radius:50%"></div>
<div class="r" style="left:169.3px;top:283.7px;width:3px;height:3px;background:#d0d0d0;border-radius:50%"></div>
<div class="r" style="left:169.3px;top:289.5px;width:3px;height:3px;background:#d0d0d0;border-radius:50%"></div>
<div class="r" style="left:185.5px;top:266.5px;width:104.1px;height:37.5px;background:#272727;border:1px solid #555555;border-radius:5px"></div>
<svg class="s" style="left:193px;top:275px;" width="21" height="21" viewBox="0 0 21 21"><path d="M2 2 L19 19 M19 2 L2 19" stroke="#7c7c7c" stroke-width="1.5"/></svg>
<svg class="s" style="left:224px;top:274px;" width="27" height="21" viewBox="0 0 27 21"><path d="M2 11 L9 18.5 L25 2.5" fill="none" stroke="#7c7c7c" stroke-width="1.5"/></svg>
<div class="t" style="left:262px;top:270.5px;font-size:27px;color:#e4e4e4;font-family:'Liberation Serif',serif;letter-spacing:-0.5px"><i>fx</i></div>
<div class="r" style="left:297px;top:266.2px;width:1523px;height:37.5px;background:#272727;border:1px solid #555555;border-radius:5px"></div>
<svg class="s" style="left:1800.3px;top:279.7px;" width="13.600000000000136" height="9.300000000000011" viewBox="0 0 13.600000000000136 9.300000000000011"><polyline points="2,2 6.800000000000068,7.300000000000011 11.600000000000136,2" fill="none" stroke="#f0f0f0" stroke-width="2" stroke-linecap="round" stroke-linejoin="round"/></svg>
<div class="r" style="left:0px;top:314px;width:1802.5px;height:32px;background:#070707;"></div>
<div class="r" style="left:704.41px;top:314px;width:91.57000000000005px;height:30.5px;background:#606060;"></div>
<div class="r" style="left:704.41px;top:344px;width:91.57000000000005px;height:2.2px;background:#1e7a48;"></div>
<div class="t" style="left:40px;width:92.5px;top:317.3px;font-size:20px;color:#d6d6d6;text-align:center">A</div>
<div class="t" style="left:132.5px;width:135.2px;top:317.3px;font-size:20px;color:#d6d6d6;text-align:center">B</div>
<div class="t" style="left:267.7px;width:162.0px;top:317.3px;font-size:20px;color:#d6d6d6;text-align:center">C</div>
<div class="t" style="left:429.7px;width:91.57px;top:317.3px;font-size:20px;color:#d6d6d6;text-align:center">D</div>
<div class="t" style="left:521.27px;width:91.57000000000005px;top:317.3px;font-size:20px;color:#d6d6d6;text-align:center">E</div>
<div class="t" style="left:612.84px;width:91.56999999999994px;top:317.3px;font-size:20px;color:#d6d6d6;text-align:center">F</div>
<div class="t" style="left:704.41px;width:91.57000000000005px;top:317.3px;font-size:20px;color:#d6d6d6;text-align:center">G</div>
<div class="t" style="left:795.98px;width:91.56999999999994px;top:317.3px;font-size:20px;color:#d6d6d6;text-align:center">H</div>
<div class="t" style="left:887.55px;width:91.57000000000005px;top:317.3px;font-size:20px;color:#d6d6d6;text-align:center">I</div>
<div class="t" style="left:979.12px;width:91.57000000000005px;top:317.3px;font-size:20px;color:#d6d6d6;text-align:center">J</div>
<div class="t" style="left:1070.69px;width:91.56999999999994px;top:317.3px;font-size:20px;color:#d6d6d6;text-align:center">K</div>
<div class="t" style="left:1162.26px;width:91.56999999999994px;top:317.3px;font-size:20px;color:#d6d6d6;text-align:center">L</div>
<div class="t" style="left:1253.83px;width:91.57000000000016px;top:317.3px;font-size:20px;color:#d6d6d6;text-align:center">M</div>
<div class="t" style="left:1345.4px;width:91.56999999999994px;top:317.3px;font-size:20px;color:#d6d6d6;text-align:center">N</div>
<div class="t" style="left:1436.97px;width:91.56999999999994px;top:317.3px;font-size:20px;color:#d6d6d6;text-align:center">O</div>
<div class="t" style="left:1528.54px;width:91.56999999999994px;top:317.3px;font-size:20px;color:#d6d6d6;text-align:center">P</div>
<div class="t" style="left:1620.11px;width:91.57000000000016px;top:317.3px;font-size:20px;color:#d6d6d6;text-align:center">Q</div>
<div class="t" style="left:1711.68px;width:91.56999999999994px;top:317.3px;font-size:20px;color:#d6d6d6;text-align:center">R</div>
<div class="r" style="left:132.0px;top:318px;width:1px;height:28px;background:#3c3c3c;"></div>
<div class="r" style="left:267.2px;top:318px;width:1px;height:28px;background:#3c3c3c;"></div>
<div class="r" style="left:429.2px;top:318px;width:1px;height:28px;background:#3c3c3c;"></div>
<div class="r" style="left:520.77px;top:318px;width:1px;height:28px;background:#3c3c3c;"></div>
<div class="r" style="left:612.34px;top:318px;width:1px;height:28px;background:#3c3c3c;"></div>
<div class="r" style="left:703.91px;top:318px;width:1px;height:28px;background:#3c3c3c;"></div>
<div class="r" style="left:795.48px;top:318px;width:1px;height:28px;background:#3c3c3c;"></div>
<div class="r" style="left:887.05px;top:318px;width:1px;height:28px;background:#3c3c3c;"></div>
<div class="r" style="left:978.62px;top:318px;width:1px;height:28px;background:#3c3c3c;"></div>
<div class="r" style="left:1070.19px;top:318px;width:1px;height:28px;background:#3c3c3c;"></div>
<div class="r" style="left:1161.76px;top:318px;width:1px;height:28px;background:#3c3c3c;"></div>
<div class="r" style="left:1253.33px;top:318px;width:1px;height:28px;background:#3c3c3c;"></div>
<div class="r" style="left:1344.9px;top:318px;width:1px;height:28px;background:#3c3c3c;"></div>
<div class="r" style="left:1436.47px;top:318px;width:1px;height:28px;background:#3c3c3c;"></div>
<div class="r" style="left:1528.04px;top:318px;width:1px;height:28px;background:#3c3c3c;"></div>
<div class="r" style="left:1619.61px;top:318px;width:1px;height:28px;background:#3c3c3c;"></div>
<div class="r" style="left:1711.18px;top:318px;width:1px;height:28px;background:#3c3c3c;"></div>
<div class="r" style="left:1802.75px;top:318px;width:1px;height:28px;background:#3c3c3c;"></div>
<svg class="s" style="left:12px;top:317px;" width="27" height="27" viewBox="0 0 27 27"><path d="M25.6 1 V25.7 H1 Z" fill="#7c7c7c"/></svg>
<div class="r" style="left:39.5px;top:318px;width:1px;height:28px;background:#3c3c3c;"></div>
<div class="r" style="left:0px;top:346px;width:40px;height:669px;background:#070707;"></div>
<div class="r" style="left:0px;top:641.7px;width:40px;height:29.57px;background:#606060;"></div>
<div class="r" style="left:38.5px;top:641.7px;width:2px;height:29.57px;background:#1e7a48;"></div>
<div class="t" style="left:0;width:40px;top:352.60px;font-size:19px;color:#d6d6d6;text-align:center">1</div>
<div class="t" style="left:0;width:40px;top:382.17px;font-size:19px;color:#d6d6d6;text-align:center">2</div>
<div class="r" style="left:0px;top:375.07px;width:40px;height:1px;background:#3c3c3c;"></div>
<div class="t" style="left:0;width:40px;top:411.74px;font-size:19px;color:#d6d6d6;text-align:center">3</div>
<div class="r" style="left:0px;top:404.64px;width:40px;height:1px;background:#3c3c3c;"></div>
<div class="t" style="left:0;width:40px;top:441.31px;font-size:19px;color:#d6d6d6;text-align:center">4</div>
<div class="r" style="left:0px;top:434.21px;width:40px;height:1px;background:#3c3c3c;"></div>
<div class="t" style="left:0;width:40px;top:470.88px;font-size:19px;color:#d6d6d6;text-align:center">5</div>
<div class="r" style="left:0px;top:463.78px;width:40px;height:1px;background:#3c3c3c;"></div>
<div class="t" style="left:0;width:40px;top:500.45px;font-size:19px;color:#d6d6d6;text-align:center">6</div>
<div class="r" style="left:0px;top:493.35px;width:40px;height:1px;background:#3c3c3c;"></div>
<div class="t" style="left:0;width:40px;top:530.02px;font-size:19px;color:#d6d6d6;text-align:center">7</div>
<div class="r" style="left:0px;top:522.92px;width:40px;height:1px;background:#3c3c3c;"></div>
<div class="t" style="left:0;width:40px;top:559.59px;font-size:19px;color:#d6d6d6;text-align:center">8</div>
<div class="r" style="left:0px;top:552.49px;width:40px;height:1px;background:#3c3c3c;"></div>
<div class="t" style="left:0;width:40px;top:589.16px;font-size:19px;color:#d6d6d6;text-align:center">9</div>
<div class="r" style="left:0px;top:582.06px;width:40px;height:1px;background:#3c3c3c;"></div>
<div class="t" style="left:0;width:40px;top:618.73px;font-size:19px;color:#d6d6d6;text-align:center">10</div>
<div class="r" style="left:0px;top:611.63px;width:40px;height:1px;background:#3c3c3c;"></div>
<div class="t" style="left:0;width:40px;top:648.30px;font-size:19px;color:#d6d6d6;text-align:center">11</div>
<div class="r" style="left:0px;top:641.2px;width:40px;height:1px;background:#3c3c3c;"></div>
<div class="t" style="left:0;width:40px;top:677.87px;font-size:19px;color:#d6d6d6;text-align:center">12</div>
<div class="r" style="left:0px;top:670.77px;width:40px;height:1px;background:#3c3c3c;"></div>
<div class="t" style="left:0;width:40px;top:707.44px;font-size:19px;color:#d6d6d6;text-align:center">13</div>
<div class="r" style="left:0px;top:700.34px;width:40px;height:1px;background:#3c3c3c;"></div>
<div class="t" style="left:0;width:40px;top:737.01px;font-size:19px;color:#d6d6d6;text-align:center">14</div>
<div class="r" style="left:0px;top:729.91px;width:40px;height:1px;background:#3c3c3c;"></div>
<div class="t" style="left:0;width:40px;top:766.58px;font-size:19px;color:#d6d6d6;text-align:center">15</div>
<div class="r" style="left:0px;top:759.48px;width:40px;height:1px;background:#3c3c3c;"></div>
<div class="t" style="left:0;width:40px;top:796.15px;font-size:19px;color:#d6d6d6;text-align:center">16</div>
<div class="r" style="left:0px;top:789.05px;width:40px;height:1px;background:#3c3c3c;"></div>
<div class="t" style="left:0;width:40px;top:825.72px;font-size:19px;color:#d6d6d6;text-align:center">17</div>
<div class="r" style="left:0px;top:818.62px;width:40px;height:1px;background:#3c3c3c;"></div>
<div class="t" style="left:0;width:40px;top:855.29px;font-size:19px;color:#d6d6d6;text-align:center">18</div>
<div class="r" style="left:0px;top:848.19px;width:40px;height:1px;background:#3c3c3c;"></div>
<div class="t" style="left:0;width:40px;top:884.86px;font-size:19px;color:#d6d6d6;text-align:center">19</div>
<div class="r" style="left:0px;top:877.76px;width:40px;height:1px;background:#3c3c3c;"></div>
<div class="t" style="left:0;width:40px;top:914.43px;font-size:19px;color:#d6d6d6;text-align:center">20</div>
<div class="r" style="left:0px;top:907.33px;width:40px;height:1px;background:#3c3c3c;"></div>
<div class="t" style="left:0;width:40px;top:944.00px;font-size:19px;color:#d6d6d6;text-align:center">21</div>
<div class="r" style="left:0px;top:936.9px;width:40px;height:1px;background:#3c3c3c;"></div>
<div class="t" style="left:0;width:40px;top:973.57px;font-size:19px;color:#d6d6d6;text-align:center">22</div>
<div class="r" style="left:0px;top:966.47px;width:40px;height:1px;background:#3c3c3c;"></div>
<div class="t" style="left:0;width:40px;top:1003.14px;font-size:19px;color:#d6d6d6;text-align:center">23</div>
<div class="r" style="left:0px;top:996.04px;width:40px;height:1px;background:#3c3c3c;"></div>
<div class="r" style="left:40px;top:346px;width:1762.5px;height:669px;background:#fcfcfe;"></div>
<div class="r" style="left:132.0px;top:346px;width:1px;height:669px;background:#dbdbe3;"></div>
<div class="r" style="left:267.2px;top:346px;width:1px;height:669px;background:#dbdbe3;"></div>
<div class="r" style="left:429.2px;top:346px;width:1px;height:669px;background:#dbdbe3;"></div>
<div class="r" style="left:520.77px;top:346px;width:1px;height:669px;background:#dbdbe3;"></div>
<div class="r" style="left:612.34px;top:346px;width:1px;height:669px;background:#dbdbe3;"></div>
<div class="r" style="left:703.91px;top:346px;width:1px;height:669px;background:#dbdbe3;"></div>
<div class="r" style="left:795.48px;top:346px;width:1px;height:669px;background:#dbdbe3;"></div>
<div class="r" style="left:887.05px;top:346px;width:1px;height:669px;background:#dbdbe3;"></div>
<div class="r" style="left:978.62px;top:346px;width:1px;height:669px;background:#dbdbe3;"></div>
<div class="r" style="left:1070.19px;top:346px;width:1px;height:669px;background:#dbdbe3;"></div>
<div class="r" style="left:1161.76px;top:346px;width:1px;height:669px;background:#dbdbe3;"></div>
<div class="r" style="left:1253.33px;top:346px;width:1px;height:669px;background:#dbdbe3;"></div>
<div class="r" style="left:1344.9px;top:346px;width:1px;height:669px;background:#dbdbe3;"></div>
<div class="r" style="left:1436.47px;top:346px;width:1px;height:669px;background:#dbdbe3;"></div>
<div class="r" style="left:1528.04px;top:346px;width:1px;height:669px;background:#dbdbe3;"></div>
<div class="r" style="left:1619.61px;top:346px;width:1px;height:669px;background:#dbdbe3;"></div>
<div class="r" style="left:1711.18px;top:346px;width:1px;height:669px;background:#dbdbe3;"></div>
<div class="r" style="left:1802.75px;top:346px;width:1px;height:669px;background:#dbdbe3;"></div>
<div class="r" style="left:40px;top:375.07px;width:1762.5px;height:1px;background:#dbdbe3;"></div>
<div class="r" style="left:40px;top:404.64px;width:1762.5px;height:1px;background:#dbdbe3;"></div>
<div class="r" style="left:40px;top:434.21px;width:1762.5px;height:1px;background:#dbdbe3;"></div>
<div class="r" style="left:40px;top:463.78px;width:1762.5px;height:1px;background:#dbdbe3;"></div>
<div class="r" style="left:40px;top:493.35px;width:1762.5px;height:1px;background:#dbdbe3;"></div>
<div class="r" style="left:40px;top:522.92px;width:1762.5px;height:1px;background:#dbdbe3;"></div>
<div class="r" style="left:40px;top:552.49px;width:1762.5px;height:1px;background:#dbdbe3;"></div>
<div class="r" style="left:40px;top:582.06px;width:1762.5px;height:1px;background:#dbdbe3;"></div>
<div class="r" style="left:40px;top:611.63px;width:1762.5px;height:1px;background:#dbdbe3;"></div>
<div class="r" style="left:40px;top:641.2px;width:1762.5px;height:1px;background:#dbdbe3;"></div>
<div class="r" style="left:40px;top:670.77px;width:1762.5px;height:1px;background:#dbdbe3;"></div>
<div class="r" style="left:40px;top:700.34px;width:1762.5px;height:1px;background:#dbdbe3;"></div>
<div class="r" style="left:40px;top:729.91px;width:1762.5px;height:1px;background:#dbdbe3;"></div>
<div class="r" style="left:40px;top:759.48px;width:1762.5px;height:1px;background:#dbdbe3;"></div>
<div class="r" style="left:40px;top:789.05px;width:1762.5px;height:1px;background:#dbdbe3;"></div>
<div class="r" style="left:40px;top:818.62px;width:1762.5px;height:1px;background:#dbdbe3;"></div>
<div class="r" style="left:40px;top:848.19px;width:1762.5px;height:1px;background:#dbdbe3;"></div>
<div class="r" style="left:40px;top:877.76px;width:1762.5px;height:1px;background:#dbdbe3;"></div>
<div class="r" style="left:40px;top:907.33px;width:1762.5px;height:1px;background:#dbdbe3;"></div>
<div class="r" style="left:40px;top:936.9px;width:1762.5px;height:1px;background:#dbdbe3;"></div>
<div class="r" style="left:40px;top:966.47px;width:1762.5px;height:1px;background:#dbdbe3;"></div>
<div class="r" style="left:40px;top:996.04px;width:1762.5px;height:1px;background:#dbdbe3;"></div>
<div class="t" style="left:40px;width:92.5px;top:351.42px;font-size:21px;color:#111;text-align:center;letter-spacing:0.5px;text-indent:0.5px">Name</div>
<div class="t" style="left:132.5px;width:135.2px;top:351.42px;font-size:21px;color:#111;text-align:center;letter-spacing:0.5px;text-indent:0.5px">Number</div>
<div class="t" style="left:40px;width:92.5px;top:380.94px;font-size:21px;color:#111;text-align:center;letter-spacing:0.5px;text-indent:0.5px">Devin</div>
<div class="t" style="left:132.5px;width:135.2px;top:380.94px;font-size:21px;color:#111;text-align:center;letter-spacing:0.5px;text-indent:0.5px">MK005</div>
<div class="t" style="left:40px;width:92.5px;top:410.46px;font-size:21px;color:#111;text-align:center;letter-spacing:0.5px;text-indent:0.5px">Michelle</div>
<div class="t" style="left:132.5px;width:135.2px;top:410.46px;font-size:21px;color:#111;text-align:center;letter-spacing:0.5px;text-indent:0.5px">MK008</div>
<div class="t" style="left:40px;width:92.5px;top:439.98px;font-size:21px;color:#111;text-align:center;letter-spacing:0.5px;text-indent:0.5px">Kelvin</div>
<div class="t" style="left:132.5px;width:135.2px;top:439.98px;font-size:21px;color:#111;text-align:center;letter-spacing:0.5px;text-indent:0.5px">SA003</div>
<div class="r" style="left:703.4px;top:640.1px;width:94.3px;height:32.1px;background:transparent;border:2.2px solid #1e7145"></div>
<div class="r" style="left:793px;top:667.7px;width:5.8px;height:5.5px;background:#1e7145;"></div>
<div class="r" style="left:1702px;top:1008.5px;width:100.5px;height:6.5px;background:#a8a8a8;"></div>
<svg class="s" style="left:665px;top:618px;" width="26" height="26" viewBox="0 0 26 26"><path d="M10 4 H16 V10 H22 V16 H16 V22 H10 V16 H4 V10 H10 Z" fill="#000" transform="translate(1.8,1.8)"/><path d="M8.5 2.5 H15.5 V9.5 H22.5 V15.5 H15.5 V22.5 H8.5 V15.5 H2.5 V9.5 H8.5 Z" fill="#fff" stroke="#000" stroke-width="1.6"/></svg>
<svg class="s" style="left:1810px;top:321px;" width="15" height="11" viewBox="0 0 15 11"><path d="M1 10 L7.3 1 L13.7 10 Z" fill="#9c9c9c" stroke="#9c9c9c" stroke-linejoin="round" stroke-width="1.5"/></svg>
<div class="r" style="left:1811px;top:339.4px;width:12.7px;height:621px;background:#9e9ea4;border-radius:6.5px"></div>
<svg class="s" style="left:1810px;top:999.5px;" width="15" height="11" viewBox="0 0 15 11"><path d="M1 1 L7.3 10 L13.7 1 Z" fill="#9c9c9c" stroke="#9c9c9c" stroke-linejoin="round" stroke-width="1.5"/></svg>
<div class="r" style="left:0px;top:1015px;width:15px;height:29.5px;background:#0b0b0b;"></div>
<div class="r" style="left:15px;top:1015px;width:89px;height:29.5px;background:#242424;"></div>
<svg class="s" style="left:26px;top:1024px;" width="10" height="12" viewBox="0 0 10 12"><path d="M8 1 L1.5 6 L8 11 Z" fill="#6a6a6a"/></svg>
<svg class="s" style="left:55px;top:1024px;" width="10" height="12" viewBox="0 0 10 12"><path d="M1.5 1 L8 6 L1.5 11 Z" fill="#a8a8a8"/></svg>
<div class="r" style="left:104px;top:1015px;width:91.7px;height:24.4px;background:#fcfcfc;"></div>
<div class="r" style="left:104px;top:1039.4px;width:91.7px;height:2.6px;background:#1e7145;"></div>
<div class="t" style="left:116px;top:1017.5px;font-size:17.6px;color:#2f8a50;">工作表1</div>
<div class="r" style="left:195.7px;top:1015px;width:59.7px;height:29.5px;background:#242424;"></div>
<svg class="s" style="left:228px;top:1019px;" width="23" height="23" viewBox="0 0 23 23"><circle cx="11.4" cy="11.4" r="9.6" fill="none" stroke="#e6e6e6" stroke-width="1.5"/><path d="M11.4 6.5 V16.3 M6.5 11.4 H16.3" stroke="#e6e6e6" stroke-width="1.8"/></svg>
<div class="r" style="left:1094.2px;top:1023.0px;width:3px;height:3px;background:#d8d8d8;border-radius:50%"></div>
<div class="r" style="left:1094.2px;top:1028.5px;width:3px;height:3px;background:#d8d8d8;border-radius:50%"></div>
<div class="r" style="left:1094.2px;top:1034.0px;width:3px;height:3px;background:#d8d8d8;border-radius:50%"></div>
<svg class="s" style="left:1117px;top:1021px;" width="13" height="15" viewBox="0 0 13 15"><path d="M11.5 1.5 L1.5 7.5 L11.5 13.5 Z" fill="#9c9c9c" stroke="#9c9c9c" stroke-linejoin="round"/></svg>
<div class="r" style="left:1136.3px;top:1023px;width:565px;height:12.1px;background:#a2a2a8;border-top-left-radius:6px;border-bottom-left-radius:6px"></div>
<div class="r" style="left:1700px;top:1023px;width:42px;height:12.1px;background:#5c5c60;border-top-right-radius:6px;border-bottom-right-radius:6px"></div>
<div class="r" style="left:1725px;top:1022px;width:3px;height:14px;background:#8c8c90;"></div>
<div class="r" style="left:1731px;top:1022px;width:3px;height:14px;background:#8c8c90;"></div>
<svg class="s" style="left:1774px;top:1021px;" width="22" height="18" viewBox="0 0 22 18"><path d="M2 15 Q4 6 12 4 L20 9 L12 14 Z" fill="#3a3a3e"/><path d="M6 12 Q9 5 13 9 L7 15" fill="none" stroke="#6a6a70" stroke-width="1.3"/></svg>
<div class="r" style="left:0px;top:1044.5px;width:1832px;height:31.5px;background:#121212;"></div>
<div class="r" style="left:0px;top:1044.5px;width:1832px;height:1px;background:#262626;"></div>
<div class="t" style="left:11px;top:1052.5px;font-size:16.5px;color:#e0e0e0;">就緒</div>
<svg class="s" style="left:62px;top:1046px;" width="34" height="30" viewBox="0 0 34 30"><circle cx="17.6" cy="7.3" r="2.5" fill="none" stroke="#e8e8e8" stroke-width="1.5"/><path d="M9.6 9.6 Q13.5 11.8 17.6 11.8 Q21.5 11.8 25.6 9 M15.3 12.3 Q14.2 17 13.6 23 L15.4 23.4 M20.8 12.3 Q20.6 14.5 21.2 16.6" fill="none" stroke="#e8e8e8" stroke-width="3.6" stroke-linecap="round" stroke-linejoin="round"/><path d="M9.6 9.6 Q13.5 11.8 17.6 11.8 Q21.5 11.8 25.6 9 M15.3 12.3 Q14.2 17 13.6 23 L15.4 23.4 M20.8 12.3 Q20.6 14.5 21.2 16.6" fill="none" stroke="#121212" stroke-width="1.1" stroke-linecap="round" stroke-linejoin="round"/><path d="M18.6 19.6 L22.6 24.2 L29.6 16.6" fill="none" stroke="#e8e8e8" stroke-width="1.7"/></svg>
<div class="t" style="left:97px;top:1052.2px;font-size:16.5px;color:#e0e0e0;">協助工具: 一切準備就緒</div>
<svg class="s" style="left:1281px;top:1051px;" width="25" height="21" viewBox="0 0 25 21"><path d="M9 14 H2 V2 H21 V9" fill="none" stroke="#dedede" stroke-width="1.5"/><circle cx="15.5" cy="14.5" r="4" fill="none" stroke="#dedede" stroke-width="2.4" stroke-dasharray="2 1.2"/><circle cx="15.5" cy="14.5" r="1.5" fill="#dedede"/></svg>
<div class="t" style="left:1308px;top:1051.5px;font-size:16.5px;color:#e0e0e0;">顯示設定</div>
<div class="r" style="left:1402.6px;top:1046.5px;width:57.4px;height:29.5px;background:#262626;"></div>
<svg class="s" style="left:1418px;top:1050px;" width="23" height="21" viewBox="0 0 23 21"><rect x="2" y="2" width="18.5" height="17" fill="none" stroke="#ececec" stroke-width="1.5"/><path d="M8.2 2 V19 M14.4 2 V19 M2 7.7 H20.5 M2 13.3 H20.5" stroke="#ececec" stroke-width="1.4"/></svg>
<svg class="s" style="left:1475px;top:1049px;" width="24" height="22" viewBox="0 0 24 22"><rect x="2" y="2" width="20" height="18" fill="none" stroke="#ececec" stroke-width="1.5"/><rect x="6" y="5" width="12" height="12" fill="none" stroke="#ececec" stroke-width="1.3"/><path d="M8 8.5 H16 M8 11 H16 M8 13.5 H16" stroke="#ececec" stroke-width="1.1"/></svg>
<svg class="s" style="left:1533px;top:1049px;" width="24" height="22" viewBox="0 0 24 22"><rect x="2" y="2" width="20" height="18" fill="none" stroke="#ececec" stroke-width="1.5"/><path d="M2 12 H15 V2 M8.5 2 V12" fill="none" stroke="#ececec" stroke-width="1.4"/></svg>
<div class="r" style="left:1580.8px;top:1059.5px;width:11.2px;height:1.5px;background:#d0d0d0;"></div>
<div class="r" style="left:1600px;top:1060px;width:141px;height:2.2px;background:#c8c8c8;"></div>
<div class="r" style="left:1667.2px;top:1051.9px;width:7.4px;height:16.3px;background:#c4c4c4;"></div>
<div class="r" style="left:1749px;top:1059.6px;width:10.7px;height:1.5px;background:#d0d0d0;"></div>
<div class="r" style="left:1753.6px;top:1054.8px;width:1.5px;height:10.7px;background:#d0d0d0;"></div>
<div class="t" style="left:1778.3px;top:1051px;font-size:17.8px;color:#e0e0e0;letter-spacing:-0.6px">100%</div>
</body></html>
